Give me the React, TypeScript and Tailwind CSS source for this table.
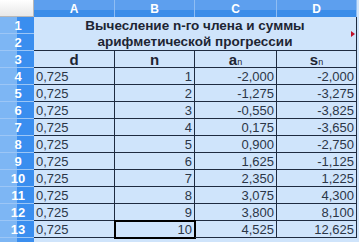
import React from "react";

const rows: [string, string, string, string][] = [
  ["0,725", "1", "-2,000", "-2,000"],
  ["0,725", "2", "-1,275", "-3,275"],
  ["0,725", "3", "-0,550", "-3,825"],
  ["0,725", "4", "0,175", "-3,650"],
  ["0,725", "5", "0,900", "-2,750"],
  ["0,725", "6", "1,625", "-1,125"],
  ["0,725", "7", "2,350", "1,225"],
  ["0,725", "8", "3,075", "4,300"],
  ["0,725", "9", "3,800", "8,100"],
  ["0,725", "10", "4,525", "12,625"],
];

function RowHead({ n, h = "h-[17px]" }: { n: string; h?: string }) {
  return (
    <div className={`relative ${h} w-[34px] flex border-b border-[#9cc6f6]`}>
      <div className="w-[17px] h-full bg-[#7db6f4]" />
      <div className="w-[17px] h-full bg-[#3a8eef]" />
      <div className="absolute inset-0 flex items-center justify-center text-white font-bold text-[13px] leading-none pl-[2px]">
        {n}
      </div>
    </div>
  );
}

export default function App() {
  const colW = ["w-[81px]", "w-[80px]", "w-[82px]", "w-[80px]"];
  return (
    <div
      className="w-[359px] h-[242px] bg-[#cfe4fb] overflow-hidden text-[#2b3647]"
      style={{ fontFamily: '"Liberation Sans", Arial, sans-serif' }}
    >
      {/* column headers */}
      <div className="flex h-[17px]">
        <div className="w-[34px] h-[17px] bg-gradient-to-b from-[#ffffff] to-[#e8e8e8] border-r border-b border-[#b8b8b8]" />
        {["A", "B", "C", "D"].map((c, i) => (
          <div
            key={c}
            className={`${colW[i]} h-[17px] flex flex-col border-r border-[#8fbdf3] relative`}
          >
            <div className="h-[10px] bg-[#5d9fee]" />
            <div className="h-[7px] bg-[#3b8de9]" />
            <div className="absolute inset-0 flex items-center justify-center text-white font-bold text-[12px] leading-none">
              {c}
            </div>
          </div>
        ))}
      </div>

      <div className="flex">
        {/* row headers */}
        <div className="flex flex-col">
          {["1", "2", "3", "4", "5", "6", "7", "8", "9", "10", "11", "12", "13"].map((n) => (
            <RowHead key={n} n={n} />
          ))}
          <RowHead n="" h="h-[10px]" />
        </div>

        {/* body */}
        <div className="flex flex-col">
          <div className="h-[34px] w-[323px] border-b border-r border-[#1e2b40] relative flex flex-col items-center justify-center font-bold text-[13.5px] leading-[16px] text-[#1d2533]">
            <div>Вычесление n-го члена и суммы</div>
            <div>арифметической прогрессии</div>
            <div className="absolute right-[1px] top-[14px] w-0 h-0 border-y-[3px] border-y-transparent border-l-[4px] border-l-[#c0102a]" />
          </div>
          <div className="flex h-[17px]">
            {[
              <span key="d">d</span>,
              <span key="n">n</span>,
              <span key="a">
                a<span className="text-[9px] font-normal">n</span>
              </span>,
              <span key="s">
                s<span className="text-[9px] font-normal">n</span>
              </span>,
            ].map((el, i) => (
              <div
                key={i}
                className={`${colW[i]} h-[17px] border-r border-b border-[#1e2b40] flex items-center justify-center font-bold text-[15px] leading-none text-[#1d2533]`}
              >
                {el}
              </div>
            ))}
          </div>
          {rows.map((r, ri) => (
            <div key={ri} className="flex h-[17px]">
              {r.map((v, i) => (
                <div
                  key={i}
                  className={`${colW[i]} h-[17px] border-r border-b border-[#1e2b40] flex items-center text-[13px] leading-none ${
                    i === 0 ? "justify-start pl-[2px]" : "justify-end pr-[2px]"
                  } ${ri === 9 && i === 1 ? "outline-2 outline-black -outline-offset-1" : ""}`}
                >
                  {v}
                </div>
              ))}
            </div>
          ))}
        </div>
      </div>
    </div>
  );
}
